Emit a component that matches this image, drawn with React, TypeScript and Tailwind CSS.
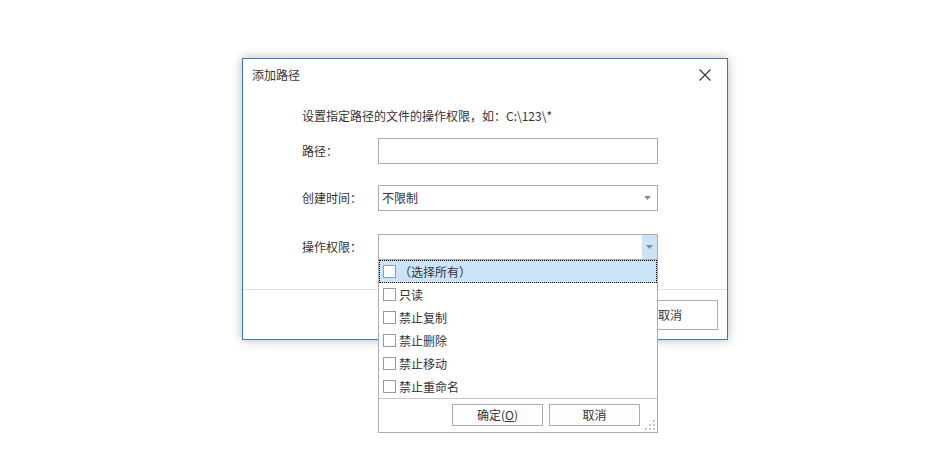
import React from 'react';

const font = { fontFamily: '"Noto Sans CJK SC", "Noto Sans", sans-serif' };

const Arrow = () => (
  <svg width="7" height="4" viewBox="0 0 7 4" className="block">
    <path d="M0 0 H7 L3.5 4 Z" fill="#8a8a8a" />
  </svg>
);

const CloseIcon = () => (
  <svg width="12" height="12" viewBox="0 0 12 12" className="block">
    <path d="M0.5 0.5 L11.5 11.5 M11.5 0.5 L0.5 11.5" stroke="#333" strokeWidth="1.1" />
  </svg>
);

const Grip = () => (
  <svg width="10" height="10" viewBox="0 0 10 10" className="block">
    {[
      [8, 0],
      [8, 4],
      [4, 4],
      [8, 8],
      [4, 8],
      [0, 8],
    ].map(([x, y]) => (
      <rect key={`${x}-${y}`} x={x} y={y} width="2" height="2" fill="#c4c4c4" />
    ))}
  </svg>
);

const options = ['只读', '禁止复制', '禁止删除', '禁止移动', '禁止重命名'];

const Checkbox = () => <span className="block w-[13px] h-[13px] border border-[#999] bg-white shrink-0" />;

export default function App() {
  return (
    <div className="w-[930px] h-[458px] bg-white text-[12px] text-[#333]" style={font}>
      <div className="pt-[58px] pl-[242px]">
        {/* Dialog */}
        <div className="w-[486px] h-[282px] bg-white border border-[#3b78b5] shadow-[0_0_10px_rgba(0,0,0,0.28)] flex flex-col">
          {/* Title bar */}
          <div className="h-[31px] flex items-center justify-between pl-[9px] pr-[16px]">
            <span className="leading-[16px]">添加路径</span>
            <CloseIcon />
          </div>

          {/* Body */}
          <div className="flex-1 pl-[59px] flex flex-col">
            <div className="mt-[18px] leading-[16px]">设置指定路径的文件的操作权限，如：C:\123\*</div>

            <div className="mt-[14px] flex items-center h-[26px]">
              <span className="w-[76px]">路径：</span>
              <div className="w-[280px] h-[26px] border border-[#ababab] bg-white" />
            </div>

            <div className="mt-[21px] flex items-center h-[26px]">
              <span className="w-[76px]">创建时间：</span>
              <div className="w-[280px] h-[26px] border border-[#ababab] bg-white flex items-center justify-between pl-[3px] pr-[3px]">
                <span>不限制</span>
                <span className="w-[13px] flex justify-center">
                  <Arrow />
                </span>
              </div>
            </div>

            <div className="mt-[23px] flex items-center h-[26px]">
              <span className="w-[76px]">操作权限：</span>
              <div className="relative w-[280px] h-[26px] border border-[#ababab] bg-white flex justify-end">
                <div className="w-[15px] h-full bg-[#cde4f7] flex items-center justify-center">
                  <Arrow />
                </div>

                {/* Dropdown list */}
                <div className="absolute left-[-1px] top-full w-[280px] h-[174px] border border-[#ababab] bg-white z-10 flex flex-col">
                  <div className="h-[23px] bg-[#cce4f7] border border-dotted border-black flex items-center pl-[3px] gap-[3px]">
                    <Checkbox />
                    <span>（选择所有）</span>
                  </div>
                  {options.map(label => (
                    <div key={label} className="h-[23px] flex items-center pl-[4px] gap-[3px]">
                      <Checkbox />
                      <span>{label}</span>
                    </div>
                  ))}
                  <div className="flex-1 border-t border-[#c8c8c8] flex items-start justify-end gap-[6px] pt-[5px] pr-[17px] relative">
                    <button className="w-[91px] h-[22px] border border-[#adadad] bg-[#fdfdfd] flex items-center justify-center">
                      确定(<span className="underline">O</span>)
                    </button>
                    <button className="w-[91px] h-[22px] border border-[#adadad] bg-[#fdfdfd] flex items-center justify-center">
                      取消
                    </button>
                    <div className="absolute right-[2px] bottom-[2px]">
                      <Grip />
                    </div>
                  </div>
                </div>
              </div>
            </div>
          </div>

          {/* Footer */}
          <div className="h-[50px] border-t border-[#dfdfdf] flex items-start justify-end gap-[6px] pt-[10px] pr-[9px]">
            <button className="w-[96px] h-[30px] border border-[#adadad] bg-white flex items-center justify-center">
              确定
            </button>
            <button className="w-[96px] h-[30px] border border-[#adadad] bg-white flex items-center justify-center">
              取消
            </button>
          </div>
        </div>
      </div>
    </div>
  );
}
